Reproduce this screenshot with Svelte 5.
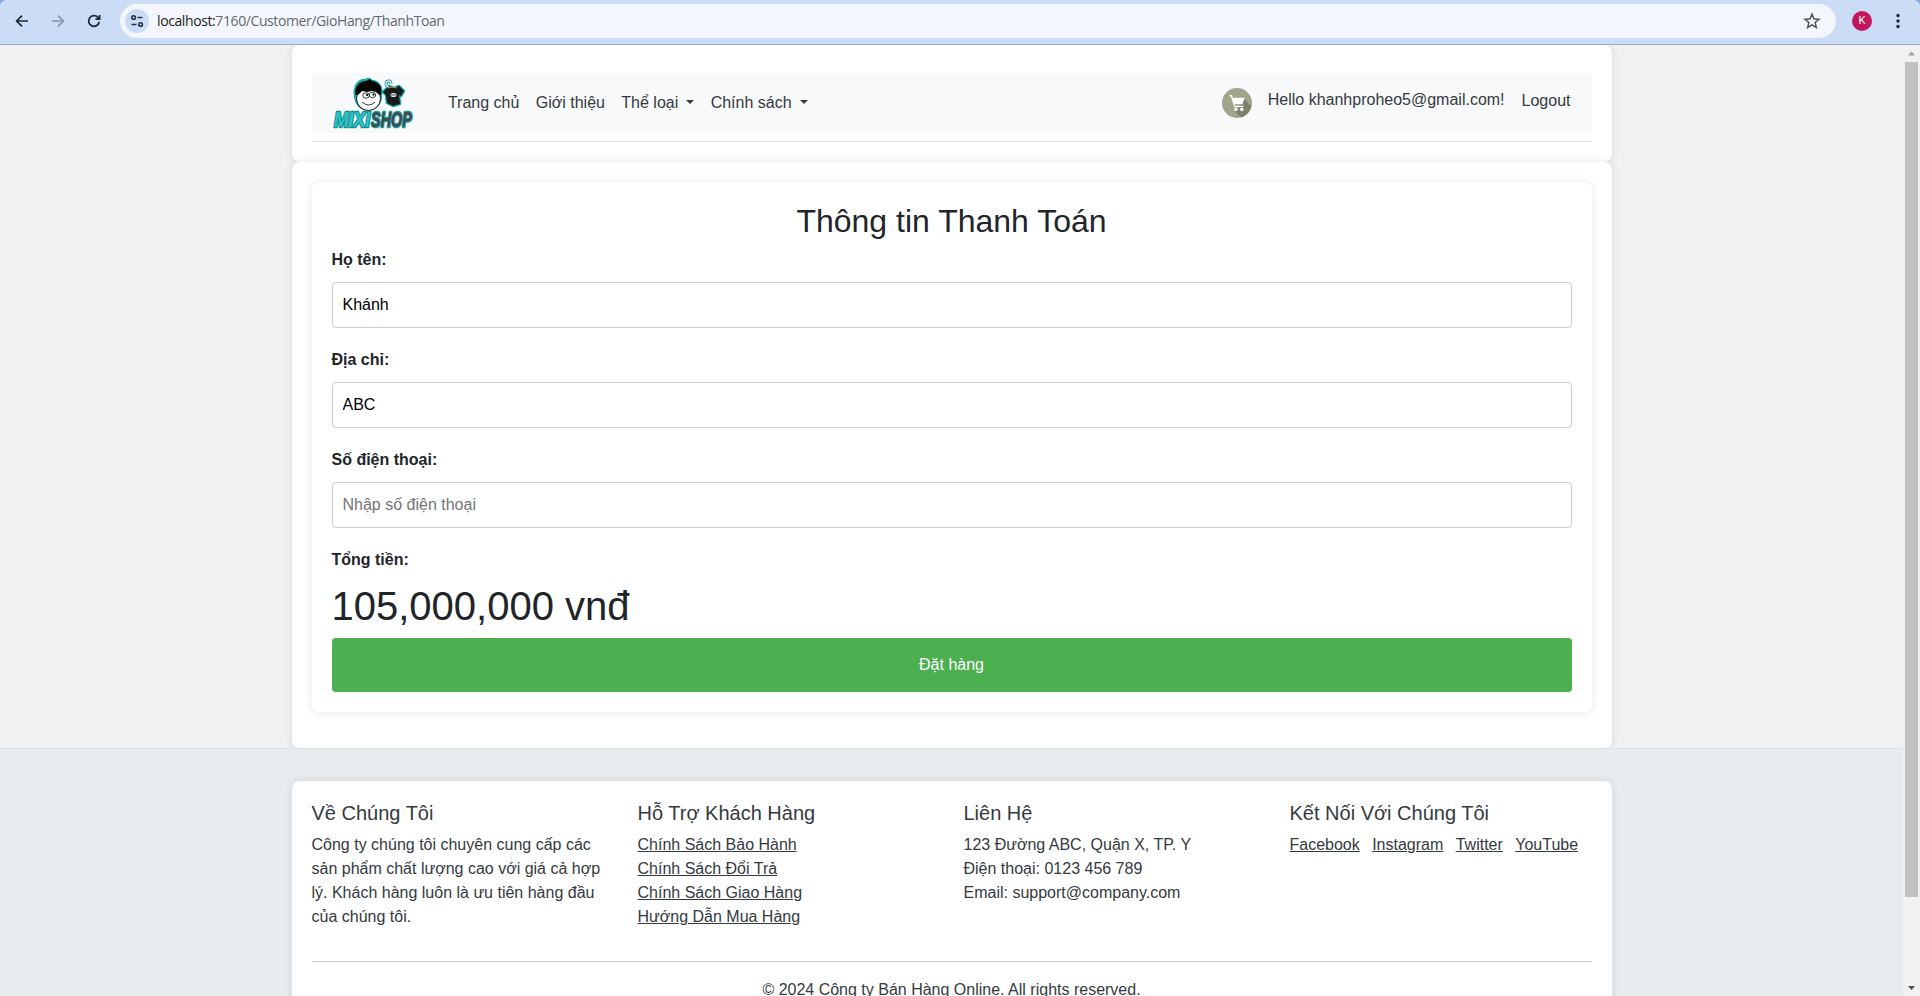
<script>
  const links = [
    { label: 'Trang chủ' },
    { label: 'Giới thiệu' },
    { label: 'Thể loại', menu: true },
    { label: 'Chính sách', menu: true }
  ];
  const support = ['Chính Sách Bảo Hành', 'Chính Sách Đổi Trả', 'Chính Sách Giao Hàng', 'Hướng Dẫn Mua Hàng'];
  const social = ['Facebook', 'Instagram', 'Twitter', 'YouTube'];
  const fields = [
    { id: 'name', label: 'Họ tên:', value: 'Khánh', hint: '' },
    { id: 'address', label: 'Địa chỉ:', value: 'ABC', hint: '' },
    { id: 'phone', label: 'Số điện thoại:', value: '', hint: 'Nhập số điện thoại' }
  ];
</script>

<div class="window">
  <div class="toolbar-wrap">
    <div class="toolbar">
      <svg class="tool back" viewBox="0 0 16 16"><path d="M14 8H3M8 2.6 2.6 8 8 13.4" /></svg>
      <svg class="tool forward" viewBox="0 0 16 16"><path d="M2 8h11M8 2.6 13.4 8 8 13.4" /></svg>
      <svg class="tool reload" viewBox="0 0 16 16"><path d="M13.2 8.9A5.3 5.3 0 1 1 11.9 4.4L13.3 5.8M13.6 2V6.1H9.5" /></svg>
      <div class="address">
        <span class="site">
          <svg viewBox="0 0 14 14"><circle cx="3.6" cy="3.5" r="1.8" /><path d="M7.5 3.5h5M1.5 10.5h5" /><circle cx="10.6" cy="10.5" r="1.8" /></svg>
        </span>
        <span class="url"><b>localhost:</b>7160/Customer/GioHang/ThanhToan</span>
        <svg class="star" viewBox="0 0 16 16"><path d="M8 1.9 9.7 6l4.5.4-3.4 2.9 1 4.4L8 11.4l-3.8 2.3 1-4.4L1.800 6.400 6.300 6Z" /></svg>
      </div>
      <span class="avatar">K</span>
      <svg class="more" viewBox="0 0 4 16"><circle cx="2" cy="2.500" r="1.700" /><circle cx="2" cy="8" r="1.700" /><circle cx="2" cy="13.500" r="1.700" /></svg>
    </div>
  </div>

  <div class="view">
    <div class="page">
      <header class="container head">
        <nav>
          <svg class="logo" viewBox="0 0 84 52">
            <g stroke="#14a9ad" stroke-width="2.500" stroke-linejoin="round" fill="#14a9ad">
              <path d="M23 18C22 8 27 3 33 3l4-1 3 2c7 1 10 6 9 14 0 8-5 14-13 14S24 27 23 18Z" />
              <path d="m51 15 6-6 5 2 5-2 5 5-3 5-2-1 1 9-7 2-6-3-1-8Z" />
            </g>
            <circle cx="36.500" cy="21.500" r="12" fill="#fff" stroke="#111" />
            <path d="M23.500 18C22 9 28 4 34 4l4-2 2 2c7 1 11 6 9 14-2 0-4-2-5-3l-4-1-5 1-5-1-4 4Z" fill="#050505" />
            <g fill="#fff" stroke="#222" stroke-width=".9"><ellipse cx="34" cy="18.500" rx="3.300" ry="2.700" /><ellipse cx="40.500" cy="18" rx="3.200" ry="2.700" /></g>
            <circle cx="35.100" cy="18" r="1.100" /><circle cx="41.400" cy="17.600" r="1.100" />
            <path d="M30 25q7 6 13 0" fill="none" stroke="#222" stroke-width=".9" />
            <path d="m51 15 6-6 5 2 5-2 5 5-3 5-2-1 1 9-7 2-6-3-1-8Z" fill="#17191a" />
            <path d="M57 10q-3-1-3-3 0-3 3-3 2 0 2 3" fill="none" stroke="#129da2" stroke-width="2.800" />
            <path d="M57 10q-3-1-3-3 0-3 3-3 2 0 2 3" fill="none" stroke="#e5e5e5" stroke-width="1.300" />
            <path d="m56 11 4-1 5 1" fill="none" stroke="#c08a45" />
            <ellipse cx="61.500" cy="18" rx="3" ry="2" fill="#e8eeee" /><path d="M59 18h5" stroke="#222" stroke-width=".8" />
            <g class="brand">
              <text x="2" y="50" textLength="36" lengthAdjust="spacingAndGlyphs" fill="#2cc3c6" stroke="#0d8d93">MIXI</text>
              <text x="39" y="50" textLength="41" lengthAdjust="spacingAndGlyphs" fill="#454a4d" stroke="#159da2">SHOP</text>
            </g>
          </svg>
          <ul>
            {#each links as link}
              <li>{link.label}{#if link.menu}<i></i>{/if}</li>
            {/each}
          </ul>
          <svg class="cart" viewBox="0 0 30 30">
            <circle cx="15" cy="15" r="15" fill="#a0a48a" />
            <path d="m22.500 11.500 6.600 6.400A15 15 0 0 1 18.800 29.500L12.500 22.500Z" fill="#7d806d" />
            <path d="M9.500 9.700h13l-2 6.500h-8Z" fill="#fff" />
            <path d="M7.500 7.800h1.900l3.500 10.600h8.600" fill="none" stroke="#fff" stroke-width="1.500" />
            <path d="M12.300 16.800h9" stroke="#a0a48a" stroke-width=".8" />
            <circle cx="14" cy="21.400" r="1.700" fill="#fff" /><circle cx="19.800" cy="21.400" r="1.700" fill="#fff" />
          </svg>
          <span class="hello">Hello khanhproheo5@gmail.com!</span>
          <span class="logout">Logout</span>
        </nav>
      </header>

      <main class="container">
        <form>
          <h2>Thông tin Thanh Toán</h2>
          {#each fields as f}
            <label for={f.id}>{f.label}</label>
            <input id={f.id} type="text" value={f.value} placeholder={f.hint} />
          {/each}
          <label for="total">Tổng tiền:</label>
          <output id="total">105,000,000 vnđ</output>
          <button type="button">Đặt hàng</button>
        </form>
      </main>

      <footer>
        <div class="container foot">
          <div class="columns">
            <section>
              <h5>Về Chúng Tôi</h5>
              <p>Công ty chúng tôi chuyên cung cấp các sản phẩm chất lượng cao với giá cả hợp lý. Khách hàng luôn là ưu tiên hàng đầu của chúng tôi.</p>
            </section>
            <section>
              <h5>Hỗ Trợ Khách Hàng</h5>
              {#each support as s}<div><u>{s}</u></div>{/each}
            </section>
            <section>
              <h5>Liên Hệ</h5>
              <div>123 Đường ABC, Quận X, TP. Y</div>
              <div>Điện thoại: 0123 456 789</div>
              <div>Email: support@company.com</div>
            </section>
            <section>
              <h5>Kết Nối Với Chúng Tôi</h5>
              <div class="social">{#each social as s}<u>{s}</u>{/each}</div>
            </section>
          </div>
          <div class="copyright">© 2024 Công ty Bán Hàng Online. All rights reserved.</div>
        </div>
      </footer>
    </div>
    <div class="scrollbar">
      <svg viewBox="0 0 17 17"><path d="M8.500 6.500 12 10.500H5Z" fill="#a3a3a3" /></svg>
      <div class="thumb"></div>
      <svg viewBox="0 0 17 17"><path d="M5 7h7l-3.500 4Z" fill="#505050" /></svg>
    </div>
  </div>
</div>

<style>
  :global(body) { margin: 0; overflow: hidden; }
  .window { width: 1920px; height: 996px; display: flex; flex-direction: column; overflow: hidden; font: 16px/24px "Liberation Sans", Arial, sans-serif; color: #212529; }
  .window * { box-sizing: border-box; }
  .toolbar-wrap { height: 45px; flex: none; background: #78a5ee; }
  .toolbar { height: 45px; display: flex; align-items: center; padding: 0 20px 3px 14px; background: #cbdcf7; border-bottom: 1px solid #9caecf; border-radius: 6px 6px 0 0; }
  .tool { width: 16px; height: 16px; fill: none; stroke: #1f2937; stroke-width: 1.700; flex: none; }
  .forward { margin-left: 20px; stroke: #8794a9; }
  .reload { margin-left: 20px; stroke-width: 1.800; }
  .address { width: 1716px; height: 34px; margin-left: 18px; display: flex; align-items: center; padding: 0 15px 0 5px; border-radius: 17px; background: #f3f7fd; }
  .site { width: 24px; height: 24px; border-radius: 50%; background: #cbdcf7; display: grid; place-items: center; }
  .site svg { width: 14px; height: 14px; fill: none; stroke: #26303d; stroke-width: 1.600; }
  .url { margin-left: 8px; font: 14px/20px "Open Sans", sans-serif; letter-spacing: -0.400px; color: #65696f; }
  .url b { font-weight: 400; color: #1c1e21; }
  .star { width: 18px; height: 18px; margin-left: auto; fill: none; stroke: #4a5058; stroke-width: 1.300; }
  .avatar { width: 20px; height: 20px; margin-left: 16px; border-radius: 50%; background: #c2185b; color: #fff; font: 11px/20px Roboto, sans-serif; text-align: center; }
  .more { width: 4px; height: 16px; margin-left: auto; fill: #202734; }
  .view { flex: 1; min-height: 0; display: flex; overflow: hidden; }
  .page { width: 1903px; flex: none; background: #f1f1f1; overflow: hidden; }
  .container { width: 1320px; margin: 0 auto; padding: 20px; background: #fff; border-radius: 8px; box-shadow: 0 0 10px rgba(0, 0, 0, .1); }
  .head { height: 117px; padding-top: 28px; }
  nav { height: 60px; display: flex; align-items: center; padding: 0 21px 0 20px; background: #f8f9fa; color: #343a40; }
  .head::after { content: ""; display: block; margin-top: 8px; border-top: 1px solid #dee2e6; }
  .logo { width: 84px; height: 52px; flex: none; overflow: visible; }
  .brand { font: italic bold 22px "Liberation Sans", sans-serif; stroke-width: 2.500px; stroke-linejoin: round; paint-order: stroke; }
  ul { display: flex; gap: 16.400px; margin: 0 auto 0 32.400px; padding: 0; list-style: none; }
  li i { display: inline-block; margin-left: 8px; vertical-align: 4px; border: 4.800px solid transparent; border-top-color: #343a40; border-bottom: 0; }
  .cart { width: 30px; height: 30px; }
  .hello { margin: 0 17px 6px 16px; }
  .logout { margin-bottom: 4px; }
  main.container { height: 586.400px; }
  form { height: 530.400px; padding: 20px; border-radius: 8px; background: #fff; box-shadow: 0 0 10px rgba(0, 0, 0, .1); }
  h2 { margin: 0 0 8px; font-size: 32px; line-height: 38.400px; font-weight: 400; text-align: center; }
  label { display: block; margin-bottom: 10px; font-weight: 700; }
  input { display: block; width: 100%; height: 46px; margin: 0 0 20px; padding: 10px; border: 1px solid #ccc; border-radius: 4px; font: inherit; color: #000; background: #fff; }
  input::placeholder { color: #757575; opacity: 1; }
  output { display: block; margin-bottom: 8px; font-size: 40px; line-height: 48px; }
  button { display: block; width: 100%; height: 54px; border: 0; border-radius: 4px; background: #4caf50; color: #fff; font: inherit; }
  footer { padding-top: 32px; border-top: 1px solid #dee2e6; background: #e9ecef; color: #343a40; }
  .columns { display: grid; grid-template-columns: repeat(4, 302px); gap: 24px; height: 160px; }
  h5 { margin: 0 0 8px; font-size: 20px; line-height: 24px; font-weight: 400; }
  p { margin: 0; }
  .social { display: flex; gap: 12.400px; }
  .copyright { padding: 16px 0; border-top: 1px solid #c9cbcd; text-align: center; }
  .scrollbar { width: 17px; background: #f1f1f1; display: flex; flex-direction: column; align-items: center; }
  .scrollbar svg { width: 17px; height: 17px; flex: none; }
  .thumb { width: 13px; height: 835px; background: #c1c1c1; margin-bottom: auto; }
</style>
